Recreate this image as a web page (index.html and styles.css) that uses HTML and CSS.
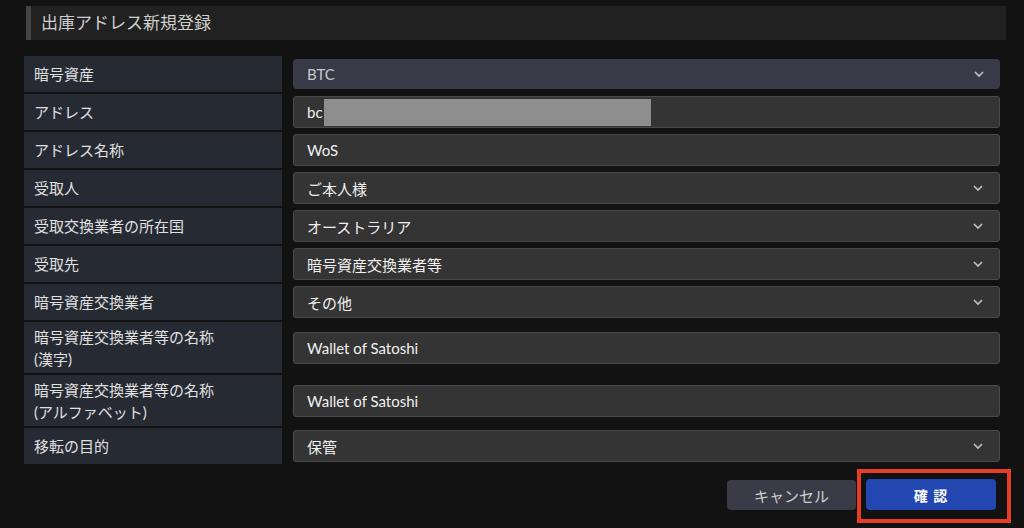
FILE: index.html
```html
<!DOCTYPE html>
<html lang="ja">
<head>
<meta charset="UTF-8" />
<meta name="viewport" content="width=device-width, initial-scale=1" />
<title>出庫アドレス新規登録</title>
<link rel="stylesheet" href="styles.css">
</head>
<body>

<h1 class="page-title">出庫アドレス新規登録</h1>

<div class="form-grid">
  <div class="label">暗号資産</div>
  <div class="cell">
    <div class="field select locked">
      <span>BTC</span>
      <svg class="chevron" width="10" height="6" viewBox="0 0 10 6"><path d="M1 1l4 4 4-4" fill="none" stroke="#c0c0c8" stroke-width="1.7"/></svg>
    </div>
  </div>

  <div class="label">アドレス</div>
  <div class="cell">
    <div class="field"><span>bc</span><span class="masked"></span></div>
  </div>

  <div class="label">アドレス名称</div>
  <div class="cell">
    <div class="field"><span>WoS</span></div>
  </div>

  <div class="label">受取人</div>
  <div class="cell">
    <div class="field select">
      <span>ご本人様</span>
      <svg class="chevron" width="10" height="6" viewBox="0 0 10 6"><path d="M1 1l4 4 4-4" fill="none" stroke="#c0c0c0" stroke-width="1.7"/></svg>
    </div>
  </div>

  <div class="label">受取交換業者の所在国</div>
  <div class="cell">
    <div class="field select">
      <span>オーストラリア</span>
      <svg class="chevron" width="10" height="6" viewBox="0 0 10 6"><path d="M1 1l4 4 4-4" fill="none" stroke="#c0c0c0" stroke-width="1.7"/></svg>
    </div>
  </div>

  <div class="label">受取先</div>
  <div class="cell">
    <div class="field select">
      <span>暗号資産交換業者等</span>
      <svg class="chevron" width="10" height="6" viewBox="0 0 10 6"><path d="M1 1l4 4 4-4" fill="none" stroke="#c0c0c0" stroke-width="1.7"/></svg>
    </div>
  </div>

  <div class="label">暗号資産交換業者</div>
  <div class="cell">
    <div class="field select">
      <span>その他</span>
      <svg class="chevron" width="10" height="6" viewBox="0 0 10 6"><path d="M1 1l4 4 4-4" fill="none" stroke="#c0c0c0" stroke-width="1.7"/></svg>
    </div>
  </div>

  <div class="label tall">暗号資産交換業者等の名称<br>(漢字)</div>
  <div class="cell">
    <div class="field"><span>Wallet of Satoshi</span></div>
  </div>

  <div class="label tall">暗号資産交換業者等の名称<br>(アルファベット)</div>
  <div class="cell">
    <div class="field"><span>Wallet of Satoshi</span></div>
  </div>

  <div class="label">移転の目的</div>
  <div class="cell">
    <div class="field select">
      <span>保管</span>
      <svg class="chevron" width="10" height="6" viewBox="0 0 10 6"><path d="M1 1l4 4 4-4" fill="none" stroke="#c0c0c0" stroke-width="1.7"/></svg>
    </div>
  </div>
</div>

<div class="actions">
  <button class="btn btn-cancel">キャンセル</button>
  <span class="highlight">
    <button class="btn btn-confirm">確 認</button>
  </span>
</div>

</body>
</html>
```

FILE: styles.css
```css
body {
  margin: 0;
  background-color: #121212;
  color: #e2e2e2;
  font-family: Lato, "Noto Sans CJK JP", sans-serif;
  font-size: 15px;
}
.page-title {
  margin: 6px 18px 0 26px;
  height: 34px;
  line-height: 33px;
  padding-left: 10px;
  border-left: 5px solid #454545;
  background-color: #212121;
  color: #cfcfcf;
  font-size: 17px;
  font-weight: normal;
}
.form-grid {
  display: grid;
  grid-template-columns: 258px 1fr;
  column-gap: 11px;
  row-gap: 2px;
  margin: 16px 24px 0 24px;
}
.label {
  background-color: #262a33;
  color: #e0e0e0;
  padding: 0 10px;
  height: 36px;
  line-height: 36px;
}
.label.tall {
  height: 51px;
  line-height: 22px;
  padding-top: 4px;
  box-sizing: border-box;
}
.cell {
  display: flex;
  align-items: center;
}
.field {
  flex: 1;
  display: flex;
  align-items: center;
  height: 32px;
  box-sizing: border-box;
  padding: 0 16px 0 13px;
  background-color: #343434;
  border: 1px solid #4a4a4a;
  border-radius: 3px;
  color: #f0f0f0;
}
.select {
  justify-content: space-between;
}
.locked {
  height: 30px;
  border: none;
  border-radius: 4px;
  padding-left: 14px;
  background-color: #393a48;
  color: #c8c8cc;
}
.chevron {
  display: block;
}
.masked {
  display: inline-block;
  width: 327px;
  height: 27px;
  margin-left: 1px;
  background-color: #8e8e8e;
}
.actions {
  display: flex;
  justify-content: flex-end;
  align-items: flex-start;
  margin: 5px 13px 0 0;
}
.btn {
  border: none;
  border-radius: 4px;
  font-family: inherit;
  font-size: 15px;
  cursor: pointer;
}
.btn-cancel {
  margin-top: 11px;
  width: 129px;
  height: 30px;
  background-color: #3a3b46;
  color: #cfcfcf;
}
.highlight {
  display: inline-block;
  margin-left: 1px;
  padding: 6px 11px 9px 5px;
  border: 4px solid #e63e26;
}
.btn-confirm {
  display: block;
  width: 130px;
  height: 31px;
  background-color: #2347b0;
  color: #ffffff;
  font-size: 14px;
  font-weight: bold;
  letter-spacing: 1px;
}
```
